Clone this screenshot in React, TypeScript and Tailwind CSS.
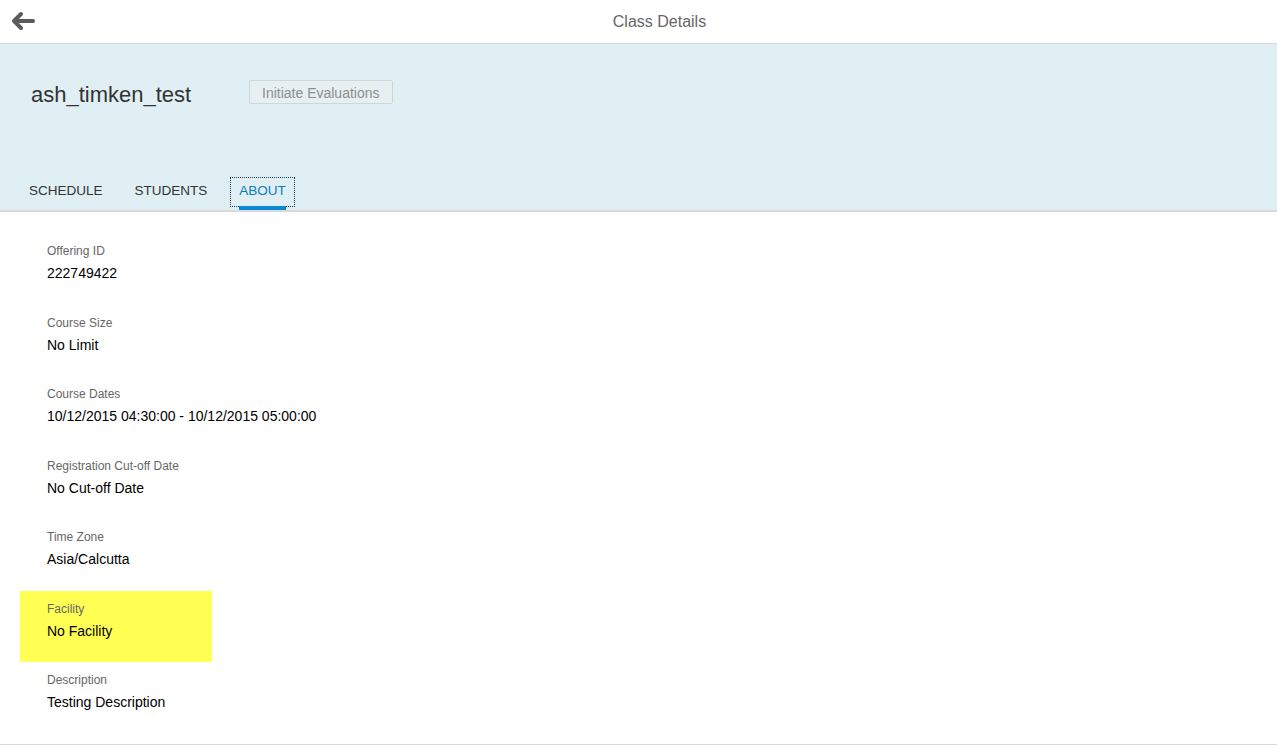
const fields = [
  { label: "Offering ID", value: "222749422" },
  { label: "Course Size", value: "No Limit" },
  { label: "Course Dates", value: "10/12/2015 04:30:00 - 10/12/2015 05:00:00" },
  { label: "Registration Cut-off Date", value: "No Cut-off Date" },
  { label: "Time Zone", value: "Asia/Calcutta" },
  { label: "Facility", value: "No Facility", highlight: true },
  { label: "Description", value: "Testing Description" },
];

export default function App() {
  return (
    <div className="min-h-screen bg-white font-['Liberation_Sans',Arial,sans-serif]">
      <header className="relative flex h-[44px] items-center justify-center border-b border-[#d9d9d9] bg-white">
        <button className="absolute left-[11px] top-[11px] text-[#5b5b5b]">
          <svg width="24" height="20" viewBox="0 0 24 20" fill="none">
            <path
              d="M10 3 L3 10 L10 17 M3.5 10 H22"
              stroke="currentColor"
              strokeWidth="4"
              strokeLinecap="round"
              strokeLinejoin="round"
            />
          </svg>
        </button>
        <h1 className="ml-[42px] text-[16px] text-[#666666]">Class Details</h1>
      </header>

      <section className="border-b-2 border-[#dadada] bg-[#dfeff3]">
        <div className="flex h-[122px] items-start px-[31px] pt-[36px]">
          <h2 className="w-[218px] text-[22px] leading-[30px] text-[#333333]">ash_timken_test</h2>
          <button className="h-[24px] rounded-[2px] border border-[#d0d6d8] bg-[#e6f0f2] px-[12px] pt-[2px] text-[14px] text-[#8e8e8e]">
            Initiate Evaluations
          </button>
        </div>
        <nav className="flex h-[44px] items-stretch pl-[20px] text-[13.5px]">
          <div className="flex items-center px-[9px] pt-[6px] text-[#333333]">SCHEDULE</div>
          <div className="ml-[14px] flex items-center px-[9px] pt-[6px] text-[#333333]">STUDENTS</div>
          <div className="relative ml-[14px] flex items-center px-[9px] pt-[6px] text-[#0a7cc1]">
            <span className="absolute inset-x-0 top-[11px] bottom-[3px] border border-dotted border-[#1a3b5c]" />
            ABOUT
            <span className="absolute bottom-0 left-[9px] right-[9px] h-[4px] bg-[#0a87d6]" />
          </div>
        </nav>
      </section>

      <main className="border-b border-[#d9d9d9] pt-[21px] pb-[10px] pl-[20px]">
        {fields.map((f) => (
          <div
            key={f.label}
            className={`h-[71.5px] w-[192px] pl-[27px] pt-[10px] ${f.highlight ? "bg-[#ffff54]" : ""}`}
          >
            <div className="whitespace-nowrap text-[12px] leading-[16px] text-[#666666]">{f.label}</div>
            <div className="mt-[4px] whitespace-nowrap text-[14px] leading-[20px] text-black">{f.value}</div>
          </div>
        ))}
      </main>
    </div>
  );
}
